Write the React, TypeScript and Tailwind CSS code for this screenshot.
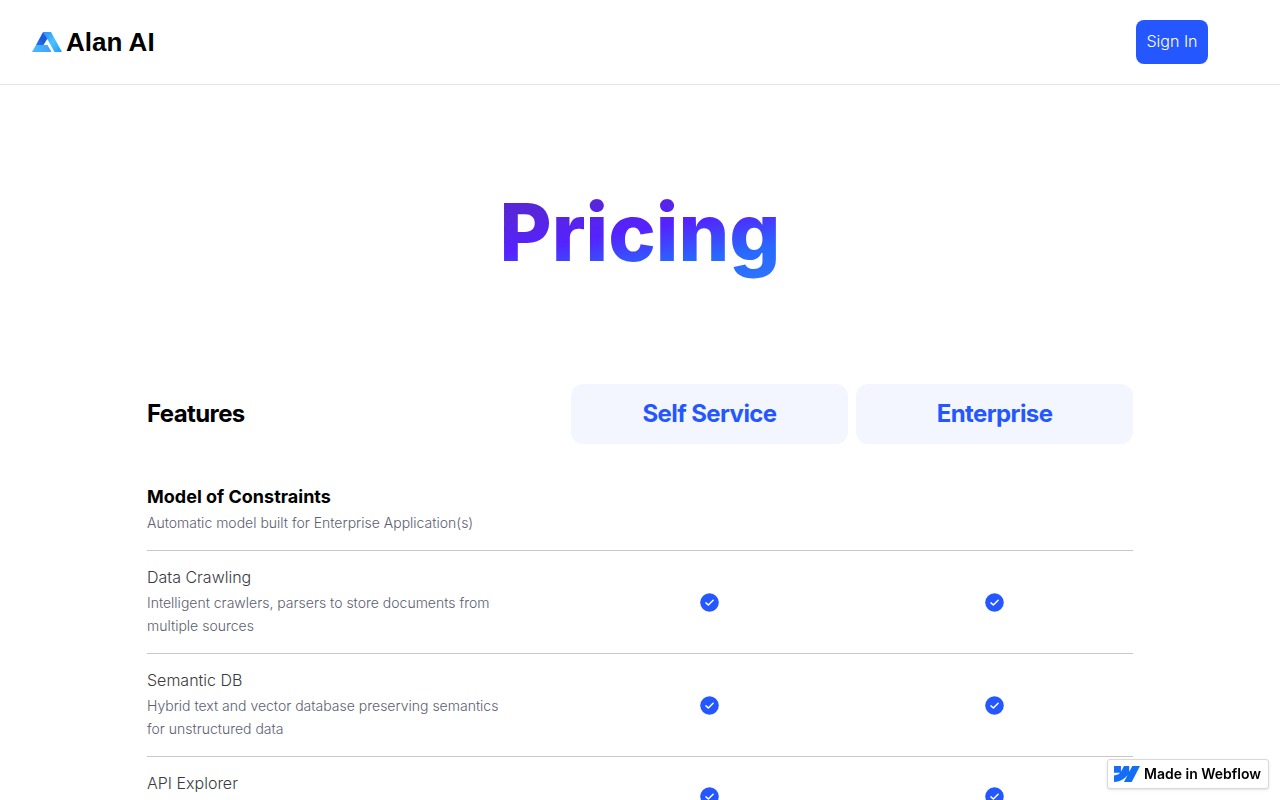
const rows = [
  { title: 'Data Crawling', text: 'Intelligent crawlers, parsers to store documents from multiple sources' },
  { title: 'Semantic DB', text: 'Hybrid text and vector database preserving semantics for unstructured data' },
  { title: 'API Explorer', text: '' },
];

function LogoMark() {
  return (
    <svg width="30" height="20" viewBox="0 0 30 20" aria-hidden="true">
      <defs>
        <linearGradient id="left" x1="0" y1="1" x2="1" y2="0">
          <stop offset="0" stopColor="#1f78f5" />
          <stop offset="0.5" stopColor="#1a58e0" />
          <stop offset="1" stopColor="#1f62e0" />
        </linearGradient>
        <linearGradient id="right" x1="0" y1="0" x2="1" y2="1">
          <stop offset="0" stopColor="#2a8cf5" />
          <stop offset="0.5" stopColor="#4cc3ff" />
          <stop offset="1" stopColor="#1e9bff" />
        </linearGradient>
        <linearGradient id="base" x1="0" y1="0" x2="1" y2="0">
          <stop offset="0" stopColor="#43bcff" />
          <stop offset="1" stopColor="#4a9cfa" />
        </linearGradient>
      </defs>
      <path d="M11 0H19L30 20H22.500L15 6.500Z" fill="url(#right)" />
      <path d="M11 0L15.500 6.500L11.500 13H4Z" fill="url(#left)" />
      <path d="M4 13H15.500L19.500 20H0Z" fill="url(#base)" />
    </svg>
  );
}

function Check() {
  return (
    <svg className="mx-auto block" width="19" height="19" viewBox="0 0 20 20" role="img" aria-label="Included">
      <circle cx="10" cy="10" r="9.800" fill="#2457ff" />
      <path d="M6.300 10.400L8.800 12.600L13.800 7.600" fill="none" stroke="#fff" strokeWidth="1.600" strokeLinecap="round" strokeLinejoin="round" />
    </svg>
  );
}

export default function App() {
  return (
    <div className="min-h-screen bg-white font-[Inter,sans-serif] text-black">
      <header className="flex items-center justify-between border-b border-[#e5e5e5] py-5 pr-[72px] pl-8">
        <a href="#" className="flex items-center gap-1">
          <LogoMark />
          <span className="font-['Liberation_Sans',sans-serif] text-[26px] leading-8 font-bold">Alan AI</span>
        </a>
        <button type="button" className="h-11 w-[72px] rounded-lg bg-[#2457ff] pb-0.5 text-base font-light text-white">
          Sign In
        </button>
      </header>

      <main className="mx-auto w-full max-w-[986px] pt-[99px]">
        <h1 className="text-center text-[80px] leading-[96px] font-extrabold">
          <span className="inline-block bg-[linear-gradient(170deg,#5826d9_22%,#5522ff_48%,#2868ff_76%,#2f74ff)] bg-clip-text text-transparent">
            Pricing
          </span>
        </h1>

        <table className="mt-[104px] w-full table-fixed border-collapse text-left">
          <colgroup>
            <col className="w-[43%]" />
            <col className="w-[28.100%]" />
            <col className="w-[28.900%]" />
          </colgroup>
          <thead className="text-2xl tracking-tight">
            <tr>
              <th scope="col" className="p-0 font-bold">Features</th>
              <th scope="col" className="p-0">
                <div className="rounded-xl bg-[#f3f6ff] py-3.5 text-center font-bold text-[#2457ff]">Self Service</div>
              </th>
              <th scope="col" className="p-0 pl-2">
                <div className="rounded-xl bg-[#f3f6ff] py-3.5 text-center font-bold text-[#2457ff]">Enterprise</div>
              </th>
            </tr>
          </thead>
          <tbody>
            <tr className="border-b border-[#c8c8c8]">
              <th scope="rowgroup" colSpan={3} className="px-0 pt-[41px] pb-4 font-normal">
                <div className="text-lg leading-6 font-bold">Model of Constraints</div>
                <p className="mt-0.5 text-sm leading-[23px] font-light text-[#5c6070]">Automatic model built for Enterprise Application(s)</p>
              </th>
            </tr>
            {rows.map((row) => (
              <tr key={row.title} className="border-b border-[#c8c8c8]">
                <th scope="row" className="px-0 pt-3.5 pb-4 align-top font-normal">
                  <div className="text-base leading-6 font-light text-[#3a3a3e]">{row.title}</div>
                  <p className="mt-0.5 min-h-[23px] max-w-[360px] text-sm leading-[23px] font-light text-[#5c6070]">{row.text}</p>
                </th>
                <td className="p-0"><Check /></td>
                <td className="p-0 pl-2"><Check /></td>
              </tr>
            ))}
          </tbody>
        </table>
      </main>

      <a href="#" className="fixed right-[11px] bottom-[11px] flex h-[30px] w-[162px] items-center gap-1 rounded-[3px] border border-[#d9d9d9] bg-white px-1.5 shadow-sm">
        <svg className="shrink-0" width="26" height="26" viewBox="0 0 24 24" aria-hidden="true">
          <path fill="#146ef5" d="m24 4.515-7.658 14.970H9.149l3.205-6.204h-.144C9.566 16.713 5.621 18.973 0 19.485v-6.118s3.596-.213 5.710-2.435H0V4.515h6.417v5.278l.144-.001 2.622-5.277h4.854v5.244h.144l2.720-5.244H24Z" />
        </svg>
        <span className="text-sm font-semibold whitespace-nowrap">Made in Webflow</span>
      </a>
    </div>
  );
}
